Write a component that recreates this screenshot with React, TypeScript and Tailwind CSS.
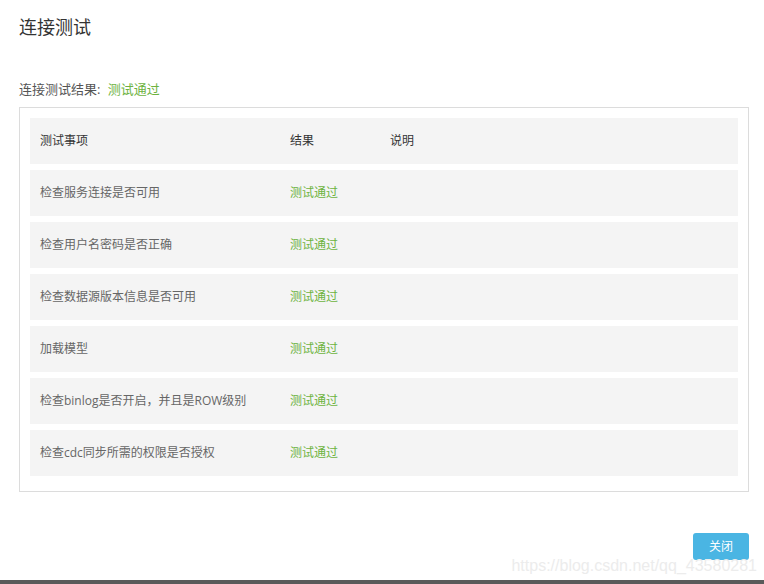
import React from "react";

const ITEMS = [
  "检查服务连接是否可用",
  "检查用户名密码是否正确",
  "检查数据源版本信息是否可用",
  "加载模型",
  "检查binlog是否开启，并且是ROW级别",
  "检查cdc同步所需的权限是否授权",
];

const font = { fontFamily: '"Open Sans", "Noto Sans CJK SC", sans-serif' };

export default function App() {
  return (
    <div className="w-[764px] h-[584px] bg-white relative overflow-hidden flex flex-col" style={font}>
      <div className="px-[19px] pt-[14px] text-[18px] leading-[26px] text-[#333]">连接测试</div>

      <div className="px-[19px] mt-[40px] text-[13px] leading-[18px] text-[#555]">
        连接测试结果: <span className="ml-[4px] text-[#6db33f]">测试通过</span>
      </div>

      {/* 结果表 */}
      <div className="mx-[19px] mt-[9px] w-[730px] border border-[#dcdcdc] p-[10px] pb-[15px] flex flex-col gap-[6px]">
        <div className="h-[46px] bg-[#f4f4f4] flex items-center text-[12px] text-[#333]">
          <div className="w-[250px] pl-[10px]">测试事项</div>
          <div className="w-[100px] pl-[10px]">结果</div>
          <div className="pl-[10px]">说明</div>
        </div>
        {ITEMS.map(it => (
          <div key={it} className="h-[46px] bg-[#f4f4f4] flex items-center text-[12px]">
            <div className="w-[250px] pl-[10px] text-[#666]">{it}</div>
            <div className="w-[100px] pl-[10px] text-[#6db33f]">测试通过</div>
            <div className="pl-[10px]"></div>
          </div>
        ))}
      </div>

      <div className="flex justify-end pr-[15px] mt-[41px]">
        <button className="w-[56px] h-[27px] rounded-[3px] bg-[#4ab5e3] text-white text-[12px]">关闭</button>
      </div>

      <div className="absolute right-[7px] top-[557px] text-[16px] leading-[18px] text-[#ececec] whitespace-nowrap" style={{ fontFamily: '"Liberation Sans", sans-serif' }}>
        https://blog.csdn.net/qq_43580281
      </div>

      <div className="absolute left-0 right-0 bottom-0 h-[4px] bg-[#5a5a5a]"></div>
    </div>
  );
}
